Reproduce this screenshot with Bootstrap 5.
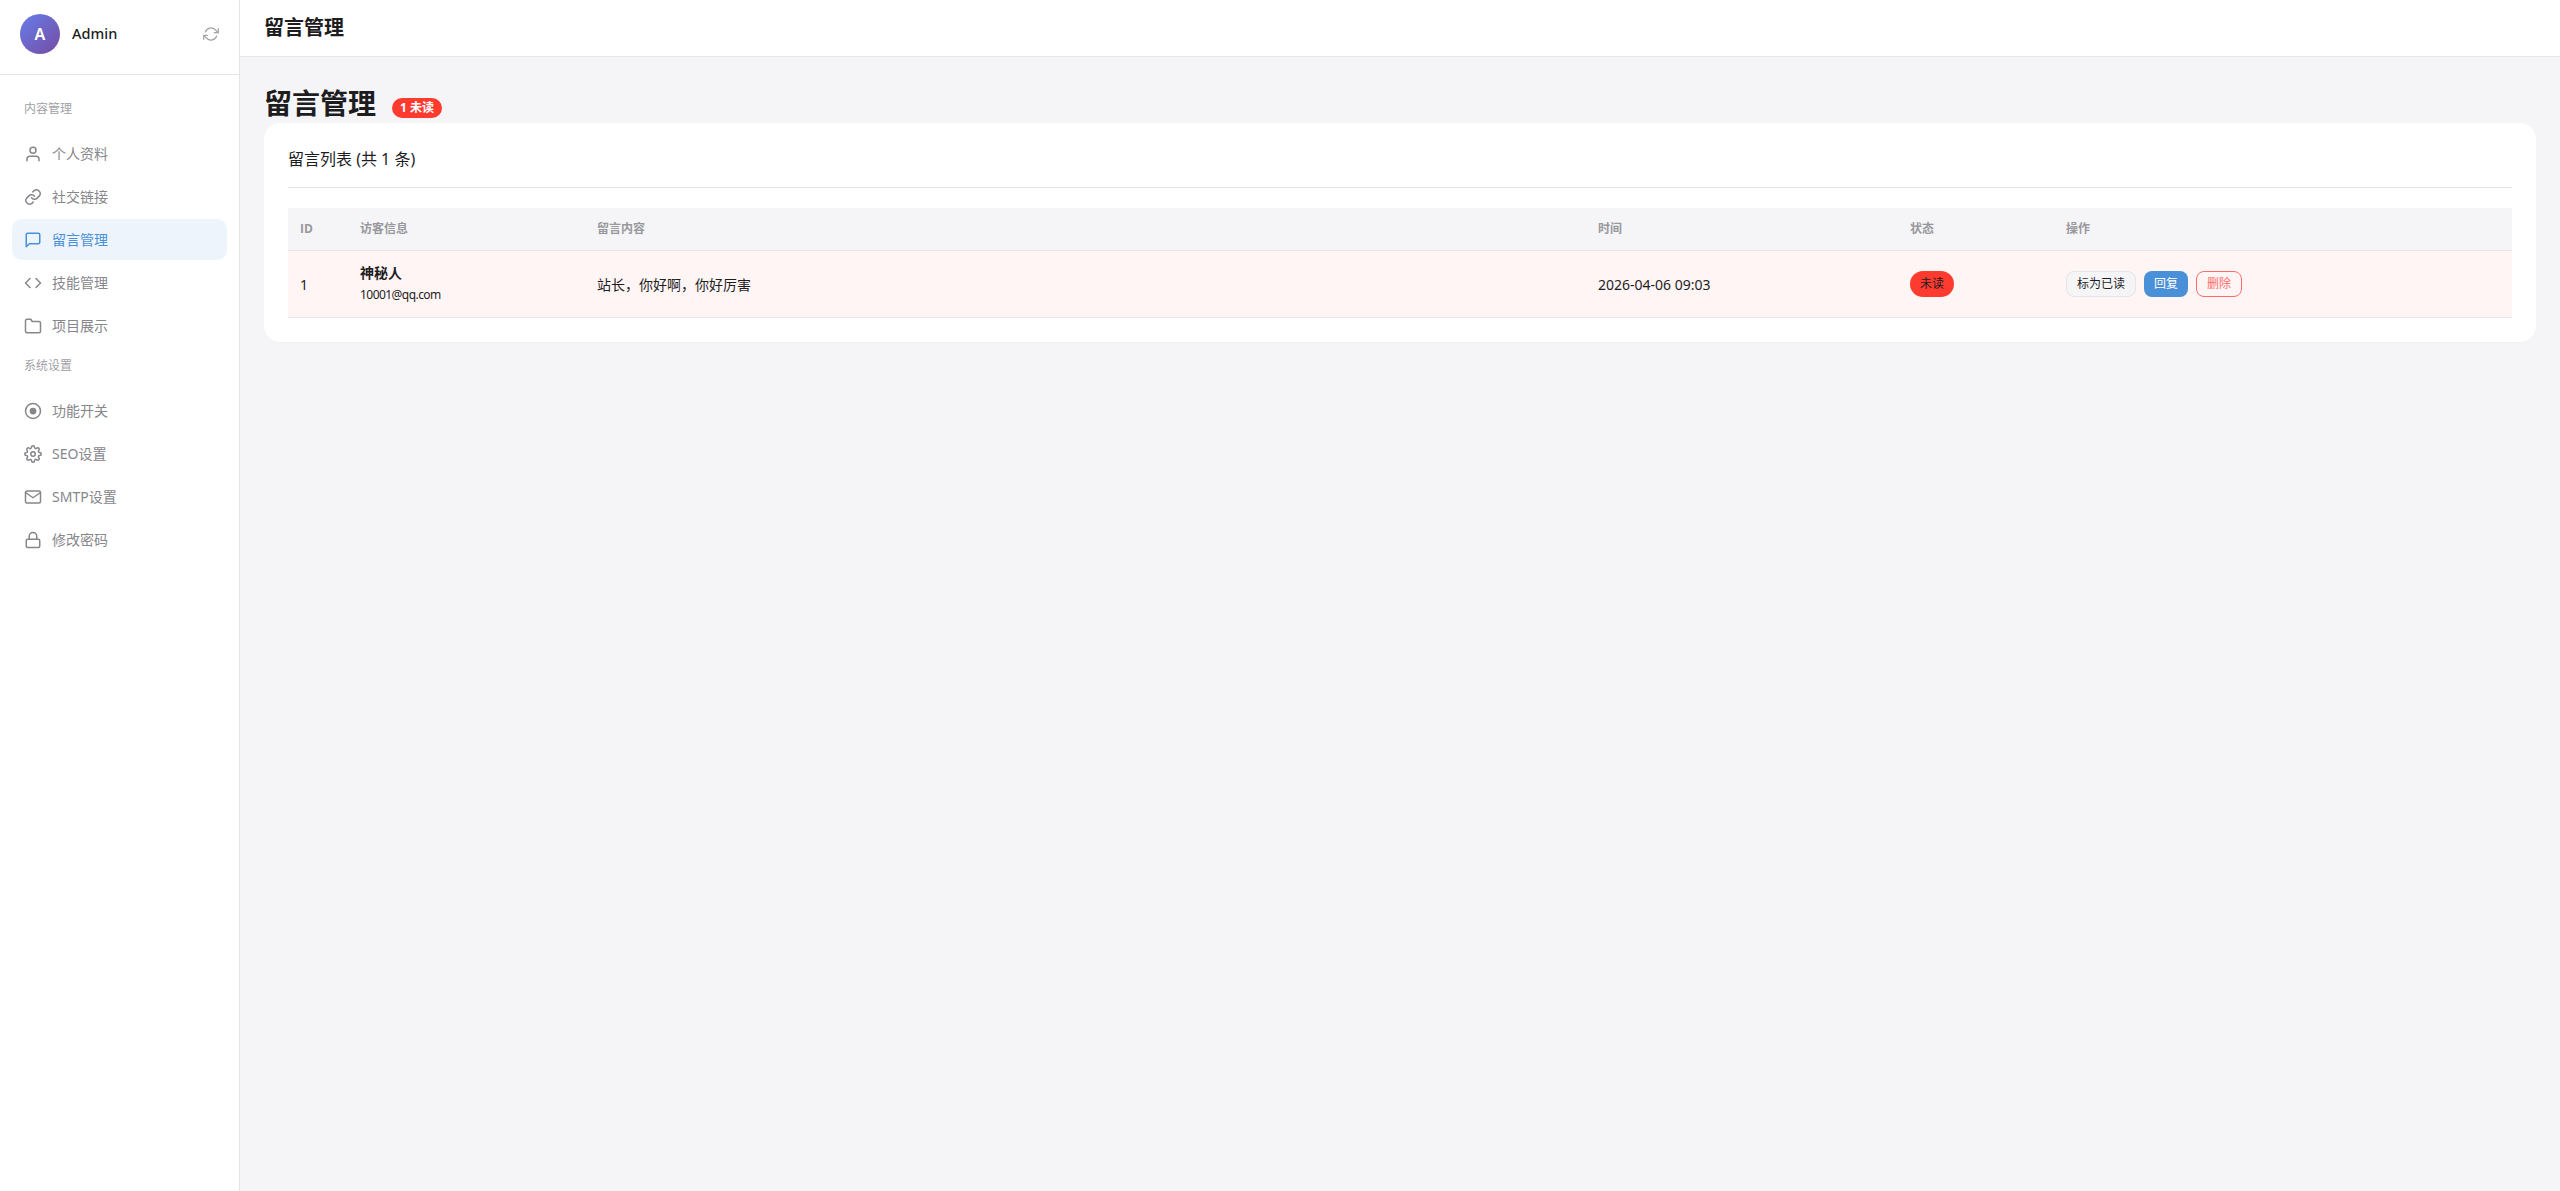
<!DOCTYPE html>
<html lang="zh-CN">
<head>
<meta charset="utf-8">
<title>留言管理</title>
<link href="https://cdn.jsdelivr.net/npm/bootstrap@5.3.0/dist/css/bootstrap.min.css" rel="stylesheet">
<style>
body{font-family:"Noto Sans","Noto Sans CJK SC",sans-serif;background:#f5f5f7;color:#1d1d1f;font-size:14px;}
.shell{min-height:1191px;}
.side{width:240px;flex:none;background:#fff;border-right:1px solid #e5e5e7;}
.side-head{height:75px;padding:0 20px 6px;border-bottom:1px solid #e5e5e7;}
.ava{width:40px;height:40px;border-radius:50%;background:linear-gradient(135deg,#667eea,#764ba2);color:#fff;font-weight:600;font-size:16px;}
.who{font-size:14.500px;font-weight:500;margin-left:12px;color:#1d1d1f;}
.sync{margin-left:auto;color:#a1a1a6;line-height:0;}
.menu{padding:25px 12px 0;}
.sec-label{font-size:12px;color:#a1a1a6;padding:0 12px;height:18px;line-height:18px;margin-bottom:15px;}
.sec-label.second{margin-top:11px;margin-bottom:15px;}
.item{height:41px;margin-bottom:2px;padding:0 12px;border-radius:10px;color:#86868b;font-size:14px;gap:10px;text-decoration:none;}
.item svg{flex:none;width:18px;height:18px;}
.item.on{background:#edf4fb;color:#4a90d9;}
.main{min-width:0;}
.topbar{height:57px;background:#fff;border-bottom:1px solid #e5e5e7;padding:0 24px;font-size:20px;font-weight:700;}
.content{padding:26px 24px 24px;}
.ptitle{font-size:28px;font-weight:700;line-height:40px;margin:0;height:40px;}
.tag-new{background:#ff3b30;color:#fff;font-size:12px;font-weight:700;height:20px;line-height:20px;padding:0 8px;border-radius:10px;margin-left:16px;margin-bottom:5px;}
.panel{background:#fff;border-radius:16px;padding:24px;height:219px;box-shadow:0 1px 3px rgba(0,0,0,.02);}
.panel-title{font-size:16px;font-weight:400;height:41px;line-height:24px;border-bottom:1px solid #e5e5e7;margin-bottom:20px;}
.tbl{table-layout:fixed;margin:0;--bs-table-bg:transparent;color:#1d1d1f;}
.tbl th{background:#f5f5f7;color:#98989d;font-family:"Open Sans","Noto Sans CJK SC",sans-serif;font-size:12px;font-weight:700;height:42px;padding:0 12px;border-bottom:1px solid #e5e5e7;vertical-align:middle;}
.tbl td{background:#fff5f5;height:67px;padding:1px 12px 0;font-size:14px;border-bottom:1px solid #e5e5e7;vertical-align:middle;color:#1d1d1f;}
.c1{width:60px}.c2{width:237px}.c3{width:1001px}.c4{width:312px}.c5{width:156px}
.vname{font-weight:700;line-height:20px;}
.vmail{font-size:12px;line-height:20px;margin-top:2px;letter-spacing:-.55px;}
.pill{display:inline-block;background:#ff3b30;color:#1d1d1f;font-size:12px;height:26px;line-height:26px;padding:0 10px;border-radius:13px;vertical-align:middle;}
.mini{font-size:12px;height:26px;line-height:24px;padding:0 10px;border-radius:8px;border:1px solid #e5e5e7;}
.mini-plain{background:#f5f5f7;color:#1d1d1f;}
.mini-blue{background:#4a90d9;border:0;line-height:26px;color:#fff;}
.mini-red{background:transparent;border-color:#ff6b6b;color:#ff6b6b;}
</style>
</head>
<body>
<div class="shell d-flex">
  <aside class="side">
    <div class="side-head d-flex align-items-center">
      <div class="ava d-flex align-items-center justify-content-center">A</div>
      <div class="who">Admin</div>
      <div class="sync">
        <svg width="16" height="16" viewBox="0 0 24 24" fill="none" stroke="currentColor" stroke-width="1.800" stroke-linecap="round" stroke-linejoin="round"><path d="M23 4v6h-6"/><path d="M1 20v-6h6"/><path d="M3.500 9a9 9 0 0 1 14.900-3.400L23 10"/><path d="M1 14l4.600 4.400A9 9 0 0 0 20.500 15"/></svg>
      </div>
    </div>
    <nav class="menu">
      <div class="sec-label">内容管理</div>
      <a class="item d-flex align-items-center" href="#"><svg viewBox="0 0 24 24" fill="none" stroke="currentColor" stroke-width="2" stroke-linecap="round" stroke-linejoin="round"><path d="M20 21v-2a4 4 0 0 0-4-4H8a4 4 0 0 0-4 4v2"/><circle cx="12" cy="7" r="4"/></svg>个人资料</a>
      <a class="item d-flex align-items-center" href="#"><svg viewBox="0 0 24 24" fill="none" stroke="currentColor" stroke-width="2" stroke-linecap="round" stroke-linejoin="round"><path d="M10 13a5 5 0 0 0 7.500.5l3-3a5 5 0 0 0-7-7l-1.700 1.700"/><path d="M14 11a5 5 0 0 0-7.500-.5l-3 3a5 5 0 0 0 7 7l1.700-1.700"/></svg>社交链接</a>
      <a class="item on d-flex align-items-center" href="#"><svg viewBox="0 0 24 24" fill="none" stroke="currentColor" stroke-width="2" stroke-linecap="round" stroke-linejoin="round"><path d="M21 15a2 2 0 0 1-2 2H7l-4 4V5a2 2 0 0 1 2-2h14a2 2 0 0 1 2 2z"/></svg>留言管理</a>
      <a class="item d-flex align-items-center" href="#"><svg viewBox="0 0 24 24" fill="none" stroke="currentColor" stroke-width="2" stroke-linecap="round" stroke-linejoin="round"><path d="M16 18l6-6-6-6"/><path d="M8 6l-6 6 6 6"/></svg>技能管理</a>
      <a class="item d-flex align-items-center" href="#"><svg viewBox="0 0 24 24" fill="none" stroke="currentColor" stroke-width="2" stroke-linecap="round" stroke-linejoin="round"><path d="M22 19a2 2 0 0 1-2 2H4a2 2 0 0 1-2-2V5a2 2 0 0 1 2-2h5l2 3h9a2 2 0 0 1 2 2z"/></svg>项目展示</a>
      <div class="sec-label second">系统设置</div>
      <a class="item d-flex align-items-center" href="#"><svg viewBox="0 0 24 24" fill="none" stroke="currentColor" stroke-width="2" stroke-linecap="round" stroke-linejoin="round"><circle cx="12" cy="12" r="10"/><circle cx="12" cy="12" r="4.500" fill="currentColor" stroke="none"/></svg>功能开关</a>
      <a class="item d-flex align-items-center" href="#"><svg viewBox="0 0 24 24" fill="none" stroke="currentColor" stroke-width="2" stroke-linecap="round" stroke-linejoin="round"><circle cx="12" cy="12" r="3"/><path d="M19.400 15a1.650 1.650 0 0 0 .33 1.820l.06.06a2 2 0 1 1-2.830 2.830l-.06-.06a1.650 1.650 0 0 0-2.820 1.170V21a2 2 0 1 1-4 0v-.09A1.650 1.650 0 0 0 9 19.400a1.650 1.650 0 0 0-1.820.33l-.06.06a2 2 0 1 1-2.830-2.830l.06-.06a1.650 1.650 0 0 0-1.170-2.820H3a2 2 0 1 1 0-4h.09A1.650 1.650 0 0 0 4.600 9a1.650 1.650 0 0 0-.33-1.820l-.06-.06a2 2 0 1 1 2.830-2.830l.06.06A1.650 1.650 0 0 0 9 4.600h.09A1.650 1.650 0 0 0 10 3.090V3a2 2 0 1 1 4 0v.09a1.650 1.650 0 0 0 2.820 1.170l.06-.06a2 2 0 1 1 2.830 2.830l-.06.06A1.650 1.650 0 0 0 19.400 9v.09A1.650 1.650 0 0 0 20.910 10H21a2 2 0 1 1 0 4h-.09a1.650 1.650 0 0 0-1.510 1z"/></svg>SEO设置</a>
      <a class="item d-flex align-items-center" href="#"><svg viewBox="0 0 24 24" fill="none" stroke="currentColor" stroke-width="2" stroke-linecap="round" stroke-linejoin="round"><path d="M4 4h16a2 2 0 0 1 2 2v12a2 2 0 0 1-2 2H4a2 2 0 0 1-2-2V6a2 2 0 0 1 2-2z"/><path d="M22 6l-10 7L2 6"/></svg>SMTP设置</a>
      <a class="item d-flex align-items-center" href="#"><svg viewBox="0 0 24 24" fill="none" stroke="currentColor" stroke-width="2" stroke-linecap="round" stroke-linejoin="round"><rect x="3" y="11" width="18" height="11" rx="2"/><path d="M7 11V7a5 5 0 0 1 10 0v4"/></svg>修改密码</a>
    </nav>
  </aside>
  <main class="main flex-grow-1">
    <div class="topbar d-flex align-items-center">留言管理</div>
    <div class="content">
      <div class="d-flex align-items-end">
        <h1 class="ptitle">留言管理</h1>
        <span class="tag-new">1 未读</span>
      </div>
      <section class="panel">
        <div class="panel-title">留言列表 (共 1 条)</div>
        <table class="table tbl">
          <colgroup><col class="c1"><col class="c2"><col class="c3"><col class="c4"><col class="c5"><col></colgroup>
          <thead><tr><th>ID</th><th>访客信息</th><th>留言内容</th><th>时间</th><th>状态</th><th>操作</th></tr></thead>
          <tbody><tr>
            <td>1</td>
            <td><div class="vname">神秘人</div><div class="vmail">10001@qq.com</div></td>
            <td>站长，你好啊，你好厉害</td>
            <td>2026-04-06 09:03</td>
            <td><span class="pill">未读</span></td>
            <td><div class="d-flex gap-2"><button class="btn mini mini-plain" type="button">标为已读</button><button class="btn mini mini-blue" type="button">回复</button><button class="btn mini mini-red" type="button">删除</button></div></td>
          </tr></tbody>
        </table>
      </section>
    </div>
  </main>
</div>
<script src="https://cdn.jsdelivr.net/npm/bootstrap@5.3.0/dist/js/bootstrap.bundle.min.js"></script>
</body>
</html>
